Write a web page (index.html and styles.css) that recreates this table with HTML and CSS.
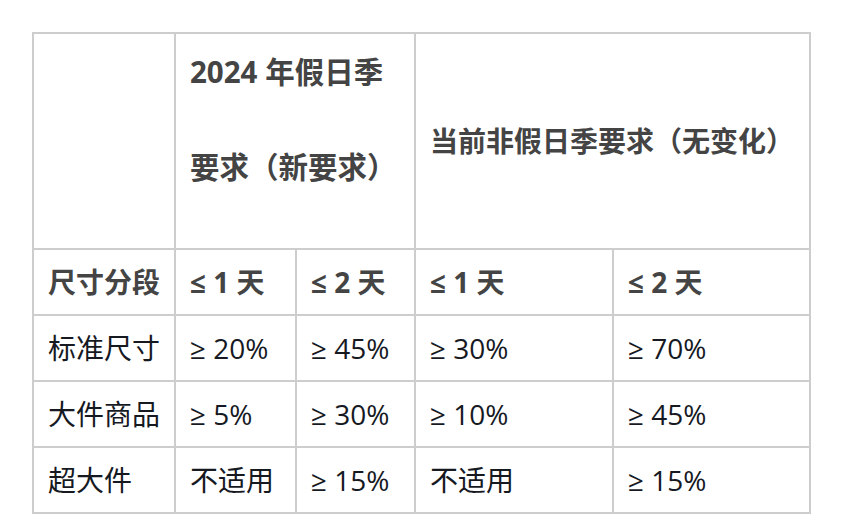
FILE: index.html
```html
<!DOCTYPE html>
<html lang="zh-CN">
<head>
<meta charset="utf-8">
<title>假日季要求</title>
<link rel="stylesheet" href="styles.css">
</head>
<body>
<div class="page">
  <table class="req">
    <colgroup>
      <col class="c1"><col class="c2"><col class="c3"><col class="c4"><col class="c5">
    </colgroup>
    <thead>
      <tr class="head">
        <th></th>
        <th colspan="2" class="split">
          <span class="line">2024 年假日季</span>
          <span class="line second">要求（新要求）</span>
        </th>
        <th colspan="2" class="plain">当前非假日季要求（无变化）</th>
      </tr>
      <tr class="sub">
        <th>尺寸分段</th>
        <th>≤ 1 天</th>
        <th>≤ 2 天</th>
        <th>≤ 1 天</th>
        <th>≤ 2 天</th>
      </tr>
    </thead>
    <tbody>
      <tr>
        <td>标准尺寸</td><td>≥ 20%</td><td>≥ 45%</td><td>≥ 30%</td><td>≥ 70%</td>
      </tr>
      <tr>
        <td>大件商品</td><td>≥ 5%</td><td>≥ 30%</td><td>≥ 10%</td><td>≥ 45%</td>
      </tr>
      <tr>
        <td>超大件</td><td>不适用</td><td>≥ 15%</td><td>不适用</td><td>≥ 15%</td>
      </tr>
    </tbody>
  </table>
</div>
</body>
</html>
```

FILE: styles.css
```css
html, body {
  margin: 0;
  padding: 0;
  background: #ffffff;
}

.page {
  padding: 32px 0 0 32px;
}

.req {
  border-collapse: collapse;
  table-layout: fixed;
  width: 777px;
  font-family: "Open Sans", "Noto Sans CJK SC", sans-serif;
  font-size: 28px;
  color: #16191f;
}

.c1 { width: 142px; }
.c2 { width: 121px; }
.c3 { width: 119px; }
.c4 { width: 198px; }
.c5 { width: 197px; }

.req th,
.req td {
  border: 2px solid #cdcdcd;
  padding: 0 14px;
  text-align: left;
  vertical-align: middle;
  line-height: 40px;
  white-space: nowrap;
}

.req th {
  font-weight: 700;
  color: #444444;
}

.head th {
  height: 196px;
  padding-top: 9px;
  padding-bottom: 9px;
}

.head th.split {
  vertical-align: top;
  padding-top: 18px;
  padding-bottom: 0;
  font-size: 29.5px;
}

.line {
  display: block;
}

.line.second {
  margin-top: 55px;
}

.sub th,
.req td {
  height: 64px;
  padding-top: 0;
  padding-bottom: 0;
}
```
